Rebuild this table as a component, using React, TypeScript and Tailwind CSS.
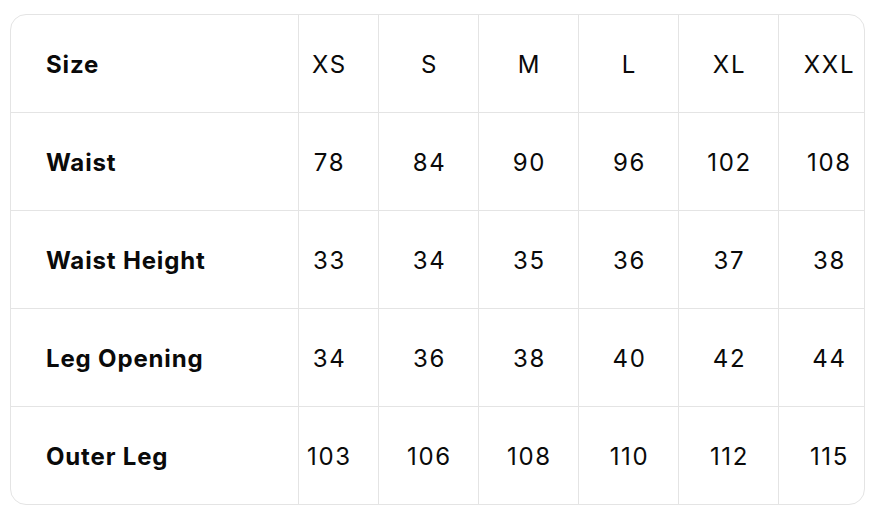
const sizes = ['XS', 'S', 'M', 'L', 'XL', 'XXL'];

const rows: { label: string; values: (string | number)[] }[] = [
  { label: 'Size', values: sizes },
  { label: 'Waist', values: [78, 84, 90, 96, 102, 108] },
  { label: 'Waist Height', values: [33, 34, 35, 36, 37, 38] },
  { label: 'Leg Opening', values: [34, 36, 38, 40, 42, 44] },
  { label: 'Outer Leg', values: [103, 106, 108, 110, 112, 115] },
];

export default function App() {
  return (
    <div className="w-[876px] h-[520px] bg-white pt-[14px] pl-[10px] font-['Inter',sans-serif] [font-optical-sizing:none] [font-variation-settings:'opsz'_14] text-[#0a0a0a]">
      <div className="w-[855px] border border-[#e4e4e4] rounded-2xl overflow-hidden">
        {rows.map((row, i) => (
          <div
            key={row.label}
            className={`flex ${i < rows.length - 1 ? 'h-[98px] border-b border-[#e4e4e4]' : 'h-[97px]'}`}
          >
            <div className="w-[288px] shrink-0 border-r border-[#e4e4e4] flex items-center pl-[35px] pt-[2px] text-2xl font-bold tracking-[0.035em]">
              {row.label}
            </div>
            <div className="flex-1 overflow-hidden">
              <div className="flex h-full -ml-[20px]">
                {row.values.map((v, j) => (
                  <div
                    key={j}
                    className="w-[100px] shrink-0 border-r border-[#e4e4e4] flex items-center justify-center pl-[2px] pt-[2px] text-2xl tracking-[0.07em]"
                  >
                    {v}
                  </div>
                ))}
              </div>
            </div>
          </div>
        ))}
      </div>
    </div>
  );
}
